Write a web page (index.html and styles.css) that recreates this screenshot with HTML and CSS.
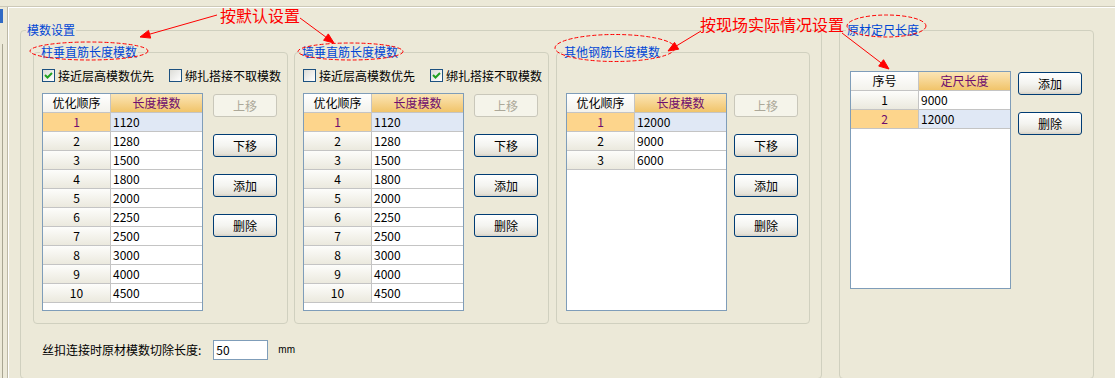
FILE: index.html
```html
<!DOCTYPE html>
<html>

<head>
    <meta charset="UTF-8" />
    <meta name="viewport" content="width=device-width, initial-scale=1.0">
    <title>模数设置</title>
    <link rel="stylesheet" href="styles.css">
</head>

<body>
    <div class="topband"></div>
    <div class="window">
        <div class="side">
            <div class="side-sel"></div>
            <div class="side-line"></div>
        </div>
        <div class="main">
            <fieldset class="group outer">
                <legend>模数设置</legend>
                <div class="boxes">
                    <!-- 柱 -->
                    <fieldset class="group box">
                        <legend>柱垂直筋长度模数</legend>
                        <div class="opts">
                            <label class="check"><span class="cb"><svg width="11" height="11" viewBox="0 0 11 11"><path d="M2 5 L4.5 7.5 L9 3" /></svg></span>接近层高模数优先</label>
                            <label class="check"><span class="cb"></span>绑扎搭接不取模数</label>
                        </div>
                        <div class="cols">
                            <div class="grid">
                                <div class="row head"><span>优化顺序</span><span>长度模数</span></div>
                                <div class="row sel"><span>1</span><span>1120</span></div>
                                <div class="row"><span>2</span><span>1280</span></div>
                                <div class="row"><span>3</span><span>1500</span></div>
                                <div class="row"><span>4</span><span>1800</span></div>
                                <div class="row"><span>5</span><span>2000</span></div>
                                <div class="row"><span>6</span><span>2250</span></div>
                                <div class="row"><span>7</span><span>2500</span></div>
                                <div class="row"><span>8</span><span>3000</span></div>
                                <div class="row"><span>9</span><span>4000</span></div>
                                <div class="row"><span>10</span><span>4500</span></div>
                            </div>
                            <div class="btns">
                                <button class="btn" disabled>上移</button>
                                <button class="btn">下移</button>
                                <button class="btn">添加</button>
                                <button class="btn">删除</button>
                            </div>
                        </div>
                    </fieldset>
                    <!-- 墙 -->
                    <fieldset class="group box">
                        <legend>墙垂直筋长度模数</legend>
                        <div class="opts">
                            <label class="check"><span class="cb"></span>接近层高模数优先</label>
                            <label class="check"><span class="cb"><svg width="11" height="11" viewBox="0 0 11 11"><path d="M2 5 L4.5 7.5 L9 3" /></svg></span>绑扎搭接不取模数</label>
                        </div>
                        <div class="cols">
                            <div class="grid">
                                <div class="row head"><span>优化顺序</span><span>长度模数</span></div>
                                <div class="row sel"><span>1</span><span>1120</span></div>
                                <div class="row"><span>2</span><span>1280</span></div>
                                <div class="row"><span>3</span><span>1500</span></div>
                                <div class="row"><span>4</span><span>1800</span></div>
                                <div class="row"><span>5</span><span>2000</span></div>
                                <div class="row"><span>6</span><span>2250</span></div>
                                <div class="row"><span>7</span><span>2500</span></div>
                                <div class="row"><span>8</span><span>3000</span></div>
                                <div class="row"><span>9</span><span>4000</span></div>
                                <div class="row"><span>10</span><span>4500</span></div>
                            </div>
                            <div class="btns">
                                <button class="btn" disabled>上移</button>
                                <button class="btn">下移</button>
                                <button class="btn">添加</button>
                                <button class="btn">删除</button>
                            </div>
                        </div>
                    </fieldset>
                    <!-- 其他 -->
                    <fieldset class="group box other">
                        <legend>其他钢筋长度模数</legend>
                        <div class="opts"></div>
                        <div class="cols">
                            <div class="grid">
                                <div class="row head"><span>优化顺序</span><span>长度模数</span></div>
                                <div class="row sel"><span>1</span><span>12000</span></div>
                                <div class="row"><span>2</span><span>9000</span></div>
                                <div class="row"><span>3</span><span>6000</span></div>
                            </div>
                            <div class="btns">
                                <button class="btn" disabled>上移</button>
                                <button class="btn">下移</button>
                                <button class="btn">添加</button>
                                <button class="btn">删除</button>
                            </div>
                        </div>
                    </fieldset>
                </div>
                <div class="cut">
                    丝扣连接时原材模数切除长度:<span class="input">50</span><span class="unit">mm</span>
                </div>
            </fieldset>

            <fieldset class="group stock">
                <legend>原材定尺长度</legend>
                <div class="cols">
                    <div class="grid">
                        <div class="row head"><span>序号</span><span>定尺长度</span></div>
                        <div class="row"><span>1</span><span>9000</span></div>
                        <div class="row sel"><span>2</span><span>12000</span></div>
                    </div>
                    <div class="btns">
                        <button class="btn">添加</button>
                        <button class="btn">删除</button>
                    </div>
                </div>
            </fieldset>
        </div>
    </div>

    <!-- red notes drawn over the dialog -->
    <div class="notes">
        <svg width="1115" height="378" viewBox="0 0 1115 378">
            <g fill="none" stroke="#f00" stroke-dasharray="4 2">
                <ellipse cx="89" cy="51" rx="59" ry="9" />
                <ellipse cx="350.5" cy="51.5" rx="52.5" ry="8.5" />
                <ellipse cx="615" cy="48" rx="60" ry="13.5" />
                <ellipse cx="886.5" cy="26" rx="39.5" ry="11" />
            </g>
            <g stroke="#f00" fill="#f00">
                <line x1="217" y1="15" x2="149.6" y2="34.2" />
                <polygon points="140,37 148.5,30.4 150.7,38.1" />
                <line x1="300" y1="18" x2="325.9" y2="37.1" />
                <polygon points="334,43 323.6,40.3 328.3,33.9" />
                <line x1="701" y1="31" x2="676.6" y2="45.8" />
                <polygon points="668,51 674.5,42.4 678.7,49.2" />
                <line x1="842" y1="33" x2="881.1" y2="62.9" />
                <polygon points="889,69 878.7,66.1 883.5,59.7" />
            </g>
        </svg>
        <span class="note note-default">按默认设置</span>
        <span class="note note-site">按现场实际情况设置</span>
    </div>
</body>

</html>
```

FILE: styles.css
```css
body {
    margin: 0;
    height: 378px;
    overflow: hidden;
    position: relative;
    background-color: #ece9d8;
    color: #000;
    font-family: "Noto Sans CJK SC", sans-serif;
    font-size: 12px;
    line-height: 14px;
}

.topband {
    height: 6px;
    border-bottom: 1px solid #cdc9b8;
}

.window {
    display: flex;
    height: 371px;
    overflow: hidden;
}

.side {
    width: 7px;
    border-right: 1px solid #bcb8a6;
    display: flex;
    flex-direction: column;
    padding-top: 2px;
}

.side-sel {
    width: 3px;
    height: 14px;
    background-color: #316ac5;
}

.side-line {
    flex: 1;
    width: 1px;
    margin: 21px 0 0 2px;
    background-color: #a8a592;
}

.main {
    flex: 1;
    display: flex;
    align-items: flex-start;
    border-top: 1px solid #fff;
    border-left: 1px solid #fff;
    padding-left: 11px;
}

/* group boxes */
.group {
    box-sizing: border-box;
    margin: 0;
    min-width: 0;
    border: 1px solid #d0d0bf;
    border-radius: 4px;
}

.group legend {
    padding: 0 1px;
    color: #0046d5;
    line-height: 14px;
}

.outer {
    width: 802px;
    height: 356px;
    margin-top: 15px;
    padding: 0 5px;
}

.boxes {
    display: flex;
    gap: 6px;
    margin: 8px 0 0 7px;
}

.box {
    width: 255px;
    height: 279px;
    padding: 0 6px;
}

.other {
    width: 254px;
    margin-left: 1px;
}

.stock {
    width: 255px;
    height: 356px;
    margin: 15px 0 0 17px;
    padding: 0 6px;
}

.opts {
    display: flex;
    align-items: center;
    height: 13px;
    margin: 10px 0 0 2px;
}

.check {
    display: flex;
    align-items: center;
    margin-right: 15px;
    white-space: nowrap;
}

.cb {
    box-sizing: border-box;
    width: 13px;
    height: 13px;
    margin-right: 3px;
    border: 1px solid #1c5180;
    background: linear-gradient(135deg, #dcdcd7, #fff);
    display: flex;
}

.cb path {
    fill: none;
    stroke: #21a121;
    stroke-width: 2;
}

.cols {
    display: flex;
    gap: 10px;
    margin: 11px 0 0 2px;
}

.other .cols {
    gap: 7px;
    margin-left: 3px;
}

.stock .cols {
    gap: 7px;
    margin: 34px 0 0 4px;
}

/* data grid */
.grid {
    box-sizing: border-box;
    width: 161px;
    height: 218px;
    border: 1px solid #7f9db9;
    background-color: #fff;
}

.row {
    display: grid;
    grid-template-columns: 68px 91px;
    height: 19px;
}

.row > span {
    border-bottom: 1px solid #c4c4c4;
    line-height: 18px;
    white-space: nowrap;
    overflow: hidden;
}

.row > span:first-child {
    border-right: 1px solid #c4c4c4;
    text-align: center;
    background: linear-gradient(#fdfdfb, #ebe9de);
}

.row > span + span {
    padding-left: 2px;
}

.head > span:first-child {
    background: linear-gradient(#fff, #f3f2ec);
}

.head > span + span {
    padding: 0;
    text-align: center;
    color: #6e0d6e;
    background: linear-gradient(#fbe5b6, #f1c46a);
}

.sel > span:first-child {
    color: #6e0d6e;
    background: #fdd58c;
}

.sel > span + span {
    background-color: #e0e8f5;
}

/* buttons */
.btns {
    display: flex;
    flex-direction: column;
    gap: 17px;
    padding-top: 1px;
}

.btn {
    box-sizing: border-box;
    width: 64px;
    height: 23px;
    padding: 0;
    border: 1px solid #003c74;
    border-radius: 3px;
    background: linear-gradient(#fff, #f4f4f0 50%, #e6e3da 88%, #d6d0c5);
    color: #000;
    font: inherit;
}

.btn:disabled {
    border-color: #c9c7ba;
    color: #aca899;
    background: #f5f4ea;
}

/* bottom line */
.cut {
    display: flex;
    align-items: center;
    height: 20px;
    margin: 16px 0 0 16px;
}

.input {
    box-sizing: border-box;
    width: 55px;
    height: 20px;
    margin-left: 12px;
    padding-left: 2px;
    border: 1px solid #7f9db9;
    background-color: #fff;
    line-height: 18px;
}

.unit {
    margin-left: 10px;
    font-family: "Liberation Sans", sans-serif;
    font-size: 10px;
}

/* red notes */
.notes {
    position: absolute;
    left: 0;
    top: 0;
    width: 1115px;
    height: 378px;
    pointer-events: none;
}

.notes svg {
    position: absolute;
    left: 0;
    top: 0;
}

.note {
    position: absolute;
    color: #f00;
    font-size: 16px;
    line-height: 20px;
    white-space: nowrap;
}

.note-default {
    left: 220px;
    top: 5px;
}

.note-site {
    left: 700px;
    top: 14px;
}
```
